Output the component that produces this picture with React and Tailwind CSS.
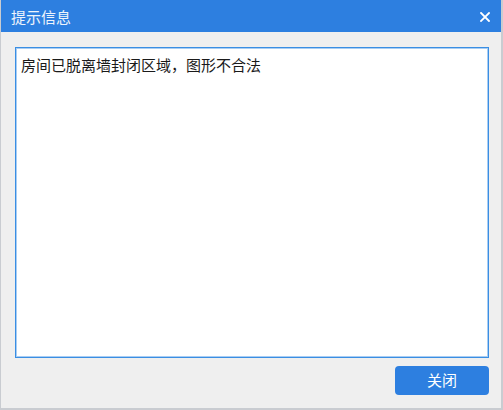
import React from "react";

export default function App() {
  return (
    <div
      className="w-[503px] h-[410px] flex flex-col bg-[#efefef] border-r-2 border-b-2 border-l border-[#c9ccd1] overflow-hidden"
      style={{ fontFamily: '"Noto Sans CJK SC", "Microsoft YaHei", sans-serif' }}
    >
      <div className="h-[32px] shrink-0 bg-[#2d7fe0] flex items-center justify-between pl-[10px] pr-[11px]">
        <span className="text-[15px] text-[#eef4fc] leading-none">提示信息</span>
        <svg width="10" height="10" viewBox="0 0 10 10" className="mt-[1px]">
          <path d="M1 1 L9 9 M9 1 L1 9" stroke="#ffffff" strokeWidth="1.8" strokeLinecap="square" />
        </svg>
      </div>
      <div className="flex-1 flex flex-col pl-[14px] pt-[15px]">
        <div className="w-[474px] h-[311px] bg-white border border-[#3a8ee3] shadow-[inset_0_0_0_1px_#a8cdf3] px-[5px] pt-[4px]">
          <span className="text-[15px] text-[#1a1a1a] leading-[20px]">房间已脱离墙封闭区域，图形不合法</span>
        </div>
        <div className="w-[474px] flex justify-end mt-[8px]">
          <button className="w-[94px] h-[29px] rounded-[4px] bg-[#2d7fe0] text-white text-[15px] flex items-center justify-center">
            关闭
          </button>
        </div>
      </div>
    </div>
  );
}
